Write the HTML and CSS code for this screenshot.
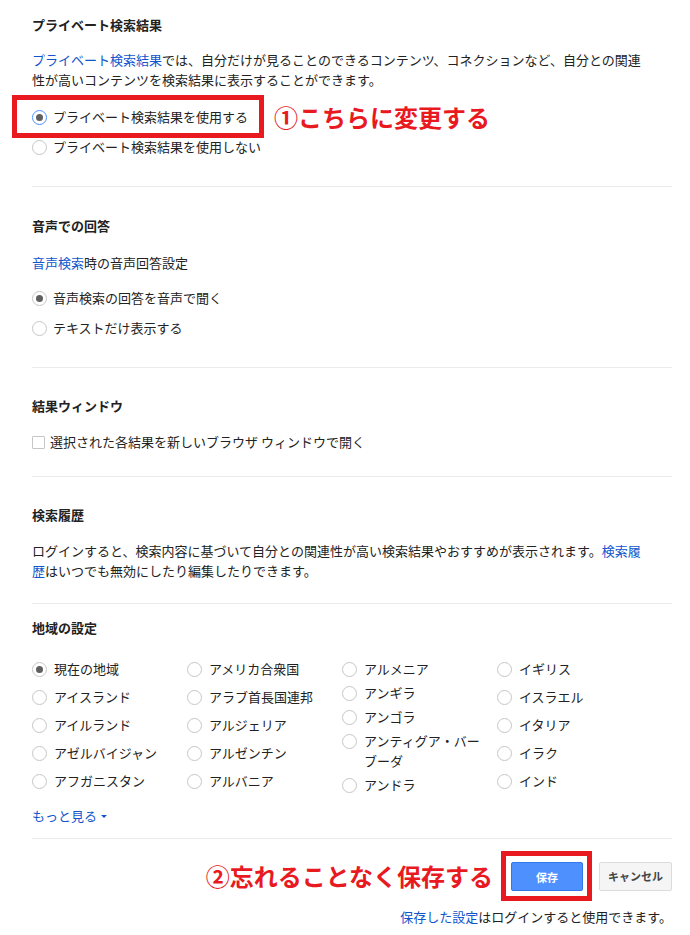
FILE: index.html
```html
<!DOCTYPE html>
<html>
<head>
    <meta charset="utf-8" />
    <title>検索設定</title>
    <link rel="stylesheet" href="styles.css">
</head>
<body>
<div id="main">
    <div class="section s-private">
        <h2 class="title">プライベート検索結果</h2>
        <p class="desc"><a href="#">プライベート検索結果</a>では、自分だけが見ることのできるコンテンツ、コネクションなど、自分との関連性が高いコンテンツを検索結果に表示することができます。</p>
        <div class="options">
            <div class="option-row">
                <label class="option"><span class="radio checked focus"></span><span>プライベート検索結果を使用する</span><span class="mark-box"></span></label>
                <span class="note note-first">①こちらに変更する</span>
            </div>
            <label class="option"><span class="radio"></span><span>プライベート検索結果を使用しない</span></label>
        </div>
    </div>

    <div class="section s-voice">
        <h2 class="title">音声での回答</h2>
        <p class="desc"><a href="#">音声検索</a>時の音声回答設定</p>
        <div class="options">
            <label class="option"><span class="radio checked"></span><span>音声検索の回答を音声で聞く</span></label>
            <label class="option"><span class="radio"></span><span>テキストだけ表示する</span></label>
        </div>
    </div>

    <div class="section s-window">
        <h2 class="title">結果ウィンドウ</h2>
        <label class="check-row"><span class="checkbox"></span><span>選択された各結果を新しいブラウザ ウィンドウで開く</span></label>
    </div>

    <div class="section s-history">
        <h2 class="title">検索履歴</h2>
        <p class="desc">ログインすると、検索内容に基づいて自分との関連性が高い検索結果やおすすめが表示されます。<a href="#">検索履歴</a>はいつでも無効にしたり編集したりできます。</p>
    </div>

    <div class="section s-region">
        <h2 class="title">地域の設定</h2>
        <div class="region-grid">
            <div class="region-col">
                <label class="option"><span class="radio checked"></span><span class="label">現在の地域</span></label>
                <label class="option"><span class="radio"></span><span class="label">アイスランド</span></label>
                <label class="option"><span class="radio"></span><span class="label">アイルランド</span></label>
                <label class="option"><span class="radio"></span><span class="label">アゼルバイジャン</span></label>
                <label class="option"><span class="radio"></span><span class="label">アフガニスタン</span></label>
            </div>
            <div class="region-col">
                <label class="option"><span class="radio"></span><span class="label">アメリカ合衆国</span></label>
                <label class="option"><span class="radio"></span><span class="label">アラブ首長国連邦</span></label>
                <label class="option"><span class="radio"></span><span class="label">アルジェリア</span></label>
                <label class="option"><span class="radio"></span><span class="label">アルゼンチン</span></label>
                <label class="option"><span class="radio"></span><span class="label">アルバニア</span></label>
            </div>
            <div class="region-col tight">
                <label class="option"><span class="radio"></span><span class="label">アルメニア</span></label>
                <label class="option"><span class="radio"></span><span class="label">アンギラ</span></label>
                <label class="option"><span class="radio"></span><span class="label">アンゴラ</span></label>
                <label class="option"><span class="radio"></span><span class="label">アンティグア・バーブーダ</span></label>
                <label class="option"><span class="radio"></span><span class="label">アンドラ</span></label>
            </div>
            <div class="region-col">
                <label class="option"><span class="radio"></span><span class="label">イギリス</span></label>
                <label class="option"><span class="radio"></span><span class="label">イスラエル</span></label>
                <label class="option"><span class="radio"></span><span class="label">イタリア</span></label>
                <label class="option"><span class="radio"></span><span class="label">イラク</span></label>
                <label class="option"><span class="radio"></span><span class="label">インド</span></label>
            </div>
        </div>
        <div class="more"><a href="#">もっと見る<span class="caret"></span></a></div>
    </div>

    <div class="footer">
        <div class="footer-row">
            <span class="note note-save">②忘れることなく保存する</span>
            <div class="save-box"><button class="btn btn-save">保存</button></div>
            <button class="btn btn-cancel">キャンセル</button>
        </div>
        <p class="footnote"><a href="#">保存した設定</a>はログインすると使用できます。</p>
    </div>
</div>
</body>
</html>
```

FILE: styles.css
```css
body {
    margin: 0;
    background: #fff;
    color: #222;
    font-family: "Noto Sans CJK JP", "Noto Sans", sans-serif;
    font-size: 13px;
    line-height: 20px;
}
a {
    color: #15c;
    text-decoration: none;
}
#main {
    width: 640px;
    margin-left: 32px;
}
.section {
    border-bottom: 1px solid #ebebeb;
}
.title {
    margin: 0;
    font-size: 13px;
    font-weight: bold;
    line-height: 20px;
}
.desc {
    margin: 16px 0 0;
    max-width: 616px;
}
.options {
    display: flex;
    flex-direction: column;
    gap: 10px;
    margin-top: 15px;
}
.option-row {
    display: flex;
    align-items: center;
}
.option {
    position: relative;
    display: flex;
    align-items: center;
    gap: 6px;
}
.radio {
    display: inline-flex;
    align-items: center;
    justify-content: center;
    flex: none;
    width: 13px;
    height: 13px;
    border: 1px solid #c6c6c6;
    border-radius: 50%;
    background: #fff;
}
.radio.focus {
    border-color: #4d90fe;
}
.radio.checked::after {
    content: "";
    width: 7px;
    height: 7px;
    border-radius: 50%;
    background: #5f5f5f;
}
.checkbox {
    flex: none;
    width: 11px;
    height: 11px;
    border: 1px solid #c6c6c6;
    border-radius: 1px;
    background: #fff;
}
.check-row {
    display: flex;
    align-items: center;
    gap: 5px;
    margin-top: 16px;
}

/* annotations */
.mark-box {
    position: absolute;
    left: -20px;
    top: -12px;
    width: 252px;
    height: 43px;
    border: 5px solid #e8191f;
    box-sizing: border-box;
}
.note {
    color: #e8191f;
    font-size: 24px;
    font-weight: bold;
    line-height: 20px;
}
.note-first {
    margin-left: 26px;
}
.note-save {
    margin-right: 8px;
}

/* sections */
.s-private {
    padding: 15px 0 29px;
}
.s-private .desc {
    margin-top: 15px;
}
.s-private .options {
    margin-top: 17px;
}
.s-voice {
    padding: 29px 0 29px;
}
.s-voice .desc {
    margin-top: 17px;
}
.s-window {
    padding: 28px 0 24px;
}
.s-history {
    padding: 28px 0 22px;
}
.s-region {
    padding: 14px 0 12px;
}

/* region list */
.region-grid {
    display: grid;
    grid-template-columns: repeat(4, 155px);
    margin-top: 17px;
}
.region-col {
    display: flex;
    flex-direction: column;
}
.region-col .option {
    align-items: flex-start;
    gap: 7px;
    padding: 4px 0;
}
.region-col .radio {
    margin-top: 2.5px;
}
.region-col .label {
    max-width: 125px;
}
.region-col.tight {
    padding-top: 2px;
}
.region-col.tight .option {
    padding: 2px 0;
}
.more {
    margin-top: 9px;
}
.caret {
    display: inline-block;
    vertical-align: middle;
    margin-left: 4px;
    margin-top: -2px;
    border-left: 3px solid transparent;
    border-right: 3px solid transparent;
    border-top: 3px solid #15c;
}

/* footer */
.footer-row {
    display: flex;
    justify-content: flex-end;
    align-items: center;
    margin-top: 12px;
}
.save-box {
    display: flex;
    padding: 6px 4px 5px 5px;
    border: 5px solid #e8191f;
    margin-right: 7px;
}
.btn {
    height: 29px;
    padding: 0;
    border-radius: 2px;
    font-family: "Noto Sans CJK JP", "Noto Sans", sans-serif;
    font-size: 11px;
    font-weight: bold;
    cursor: pointer;
}
.btn-save {
    width: 72px;
    background: #4d90fe;
    border: 1px solid #3079ed;
    color: #fff;
}
.btn-cancel {
    width: 73px;
    background: #f5f5f5;
    border: 1px solid #dcdcdc;
    color: #444;
}
.footnote {
    margin: 6px 0 0;
    text-align: right;
}
```
